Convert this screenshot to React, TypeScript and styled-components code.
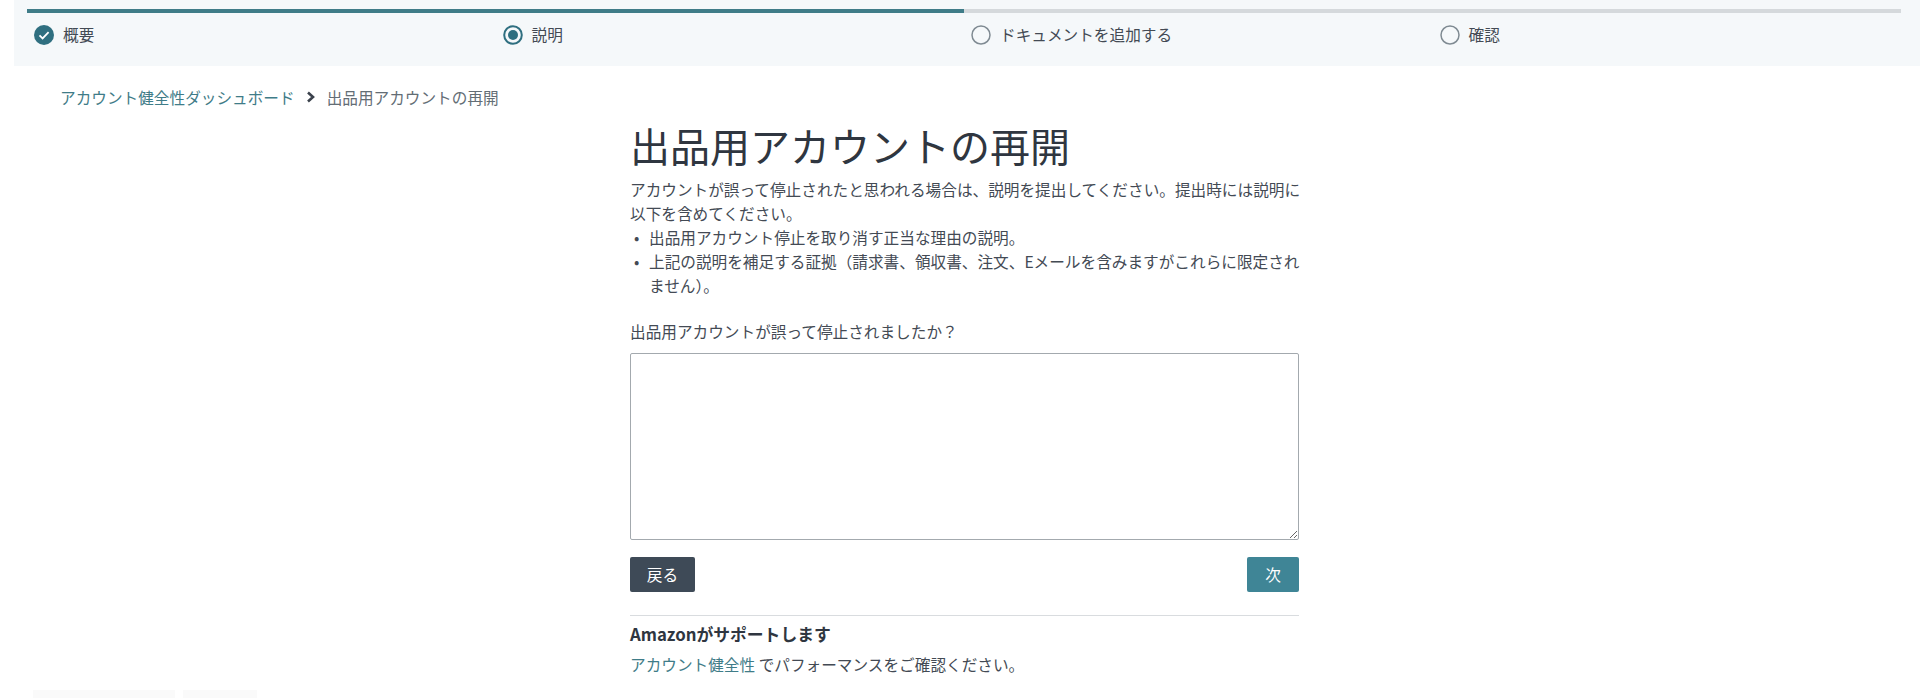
import React from 'react'
import styled, { createGlobalStyle } from 'styled-components'

const GlobalStyle = createGlobalStyle`
    html, body {
        margin: 0;
        padding: 0;
        background: #ffffff;
        overflow: hidden;
    }
    body {
        font-family: "Noto Sans CJK JP", "Noto Sans", sans-serif;
        font-size: 15.65px;
        color: #434a54;
    }
`

const StepperBand = styled.div`
    height: 66px;
    margin-left: 14px;
    padding: 9px 19px 0 13px;
    box-sizing: border-box;
    background-color: #f5f8fa;
`

const Track = styled.div`
    height: 4px;
    background-color: #d5d9dc;
`

const TrackFill = styled.div`
    width: 50%;
    height: 100%;
    background-color: #3f7c88;
`

const Steps = styled.div`
    display: grid;
    grid-template-columns: repeat(4, 1fr);
    margin-top: 12px;
`

const Step = styled.div`
    display: flex;
    align-items: center;
    gap: 9px;
    padding-left: 7px;
    height: 20px;
    line-height: 20px;
`

const Crumbs = styled.nav`
    display: flex;
    align-items: center;
    height: 24px;
    margin-top: 19px;
    padding-left: 60px;
    color: #636d75;
`

const CrumbLink = styled.a`
    color: #3f7c88;
    text-decoration: none;
`

const CrumbArrow = styled.svg`
    width: 10px;
    height: 12px;
    margin: 0 11px 0 11px;
`

const Content = styled.main`
    width: 669px;
    margin-left: 630px;
`

const Title = styled.h1`
    margin: 7px 0 0;
    font-size: 40px;
    font-weight: 400;
    line-height: 58px;
    color: #2f3640;
`

const Paragraph = styled.p`
    margin: 4px -8px 0 0;
    line-height: 24px;
`

const BulletList = styled.ul`
    margin: 0 -8px 0 0;
    padding: 0;
    list-style: none;
    line-height: 24px;
`

const BulletItem = styled.li`
    display: flex;

    &::before {
        content: "•";
        flex: 0 0 15px;
        padding-left: 4px;
    }
`

const Question = styled.label`
    display: block;
    margin-top: 22px;
    line-height: 24px;
`

const Answer = styled.textarea`
    display: block;
    width: 100%;
    height: 187px;
    margin-top: 9px;
    box-sizing: border-box;
    border: 1px solid #a3a9ae;
    border-radius: 2px;
    background: #ffffff;
    outline: none;
`

const Actions = styled.div`
    display: flex;
    justify-content: space-between;
    margin-top: 17px;
`

interface ActionButtonProps {
    readonly $primary?: boolean;
}

const ActionButton = styled.button<ActionButtonProps>`
    height: 35px;
    width: ${props => props.$primary ? "52px" : "65px"};
    padding: 0;
    border: none;
    border-radius: 2px;
    font-family: inherit;
    font-size: 15.65px;
    color: #ffffff;
    background-color: ${props => props.$primary ? "#3f8596" : "#3e4a57"};
`

const Divider = styled.hr`
    margin: 23px 0 0;
    border: none;
    border-top: 1px solid #d9dcdf;
`

const SupportTitle = styled.h2`
    margin: 5px 0 0;
    font-size: 16.8px;
    font-weight: 700;
    line-height: 26px;
    color: #2f3640;
`

const SupportText = styled.p`
    margin: 6px 0 0;
    line-height: 24px;
`

const SupportLink = styled.a`
    color: #3f7c88;
    text-decoration: none;
`

const FooterGhost = styled.div`
    display: flex;
    gap: 8px;
    margin-top: 13px;
    padding-left: 33px;
`

const GhostBlock = styled.div<{ $width: number }>`
    width: ${props => props.$width}px;
    height: 8px;
    background-color: #fafafa;
`

const StepIcon = ({ state }: { state: 'done' | 'current' | 'todo' }) => {
    if (state === 'done') {
        return (
            <svg width="20" height="20" viewBox="0 0 20 20">
                <circle cx="10" cy="10" r="10" fill="#2f6f80" />
                <path d="M5.5 10.4 8.6 13.4 14.6 7.2" fill="none" stroke="#ffffff" strokeWidth="1.8" />
            </svg>
        )
    }
    if (state === 'current') {
        return (
            <svg width="20" height="20" viewBox="0 0 20 20">
                <circle cx="10" cy="10" r="8.8" fill="none" stroke="#2f6f80" strokeWidth="2" />
                <circle cx="10" cy="10" r="5" fill="#2f6f80" />
            </svg>
        )
    }
    return (
        <svg width="20" height="20" viewBox="0 0 20 20">
            <circle cx="10" cy="10" r="9" fill="none" stroke="#7f8a92" strokeWidth="1.5" />
        </svg>
    )
}

const steps: { label: string; state: 'done' | 'current' | 'todo' }[] = [
    { label: '概要', state: 'done' },
    { label: '説明', state: 'current' },
    { label: 'ドキュメントを追加する', state: 'todo' },
    { label: '確認', state: 'todo' },
]

const App = () => {
    return (
        <>
            <GlobalStyle />
            <StepperBand>
                <Track>
                    <TrackFill />
                </Track>
                <Steps>
                    {steps.map(s =>
                        <Step key={s.label}>
                            <StepIcon state={s.state} />
                            {s.label}
                        </Step>
                    )}
                </Steps>
            </StepperBand>
            <Crumbs>
                <CrumbLink href="#">アカウント健全性ダッシュボード</CrumbLink>
                <CrumbArrow viewBox="0 0 10 12">
                    <path d="M2 1.5 7 6 2 10.5" fill="none" stroke="#3b424c" strokeWidth="2.6" />
                </CrumbArrow>
                出品用アカウントの再開
            </Crumbs>
            <Content>
                <Title>出品用アカウントの再開</Title>
                <Paragraph>
                    アカウントが誤って停止されたと思われる場合は、説明を提出してください。提出時には説明に以下を含めてください。
                </Paragraph>
                <BulletList>
                    <BulletItem>出品用アカウント停止を取り消す正当な理由の説明。</BulletItem>
                    <BulletItem>上記の説明を補足する証拠（請求書、領収書、注文、Eメールを含みますがこれらに限定されません）。</BulletItem>
                </BulletList>
                <Question htmlFor="appeal">出品用アカウントが誤って停止されましたか？</Question>
                <Answer id="appeal" />
                <Actions>
                    <ActionButton>戻る</ActionButton>
                    <ActionButton $primary>次</ActionButton>
                </Actions>
                <Divider />
                <SupportTitle>Amazonがサポートします</SupportTitle>
                <SupportText>
                    <SupportLink href="#">アカウント健全性</SupportLink> でパフォーマンスをご確認ください。
                </SupportText>
            </Content>
            <FooterGhost>
                <GhostBlock $width={142} />
                <GhostBlock $width={74} />
            </FooterGhost>
        </>
    )
}

export default App
